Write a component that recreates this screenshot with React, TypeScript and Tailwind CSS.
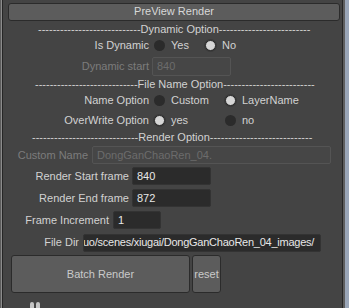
import React from "react";

const Radio = ({ on }: { on: boolean }) => (
  <div
    className={
      on
        ? "w-[11px] h-[11px] rounded-full bg-[#d6d6d6] border border-[#2a2a2a] shadow-[0_0_0_1px_#3a3a3a] shrink-0"
        : "w-[11px] h-[11px] rounded-full bg-[#2b2b2b] shrink-0"
    }
  />
);

const RadioOpt = ({ on, label, w }: { on: boolean; label: string; w: string }) => (
  <div className={`flex items-center ${w}`}>
    <Radio on={on} />
    <span className="ml-[6px] text-[#d2d2d2]">{label}</span>
  </div>
);

export default function App() {
  const d = (n: number) => "-".repeat(n);
  return (
    <div className="w-[349px] h-[308px] flex overflow-hidden [font-family:'Liberation_Sans',Arial,sans-serif] text-[11px] leading-none bg-[#444444]">
      <div className="w-[1px] bg-[#5c5c5c]" />
      <div className="w-[1px] bg-[#8c8c8c]" />
      <div className="w-[341px] shrink-0 flex flex-col border-l border-r border-[#262626] bg-[#444444]">
        {/* Preview button */}
        <div className="mt-[3px] ml-[5px] w-[332px] h-[18px] rounded-[3px] border border-[#2b2b2b] bg-[#5c5c5c] flex items-center justify-center text-[#d8d8d8]">
          PreView Render
        </div>
        {/* Dynamic option */}
        <div className="h-[18px] flex items-center pl-[35px] whitespace-nowrap text-[#d2d2d2]">
          {d(28) + "Dynamic Option" + d(25)}
        </div>
        <div className="h-[14px] flex items-center">
          <div className="w-[146px] text-right text-[#d2d2d2]">Is Dynamic</div>
          <div className="ml-[5px] flex items-center">
            <RadioOpt on={false} label="Yes" w="w-[51px]" />
            <RadioOpt on={true} label="No" w="w-[51px]" />
          </div>
        </div>
        <div className="h-[27px] flex items-center">
          <div className="w-[146px] text-right text-[#7c7c7c]">Dynamic start</div>
          <div className="ml-[3px] w-[79px] h-[19px] rounded-[2px] border border-[#545454] bg-[#464646] flex items-center pl-[4px] text-[#6c6c6c]">
            840
          </div>
        </div>
        {/* File name option */}
        <div className="h-[10px] flex items-center pl-[32px] whitespace-nowrap text-[#d2d2d2]">
          {d(28) + "File Name Option" + d(25)}
        </div>
        <div className="h-[22px] flex items-center">
          <div className="w-[146px] text-right text-[#d2d2d2]">Name Option</div>
          <div className="ml-[5px] flex items-center">
            <RadioOpt on={false} label="Custom" w="w-[71px]" />
            <RadioOpt on={true} label="LayerName" w="w-[80px]" />
          </div>
        </div>
        <div className="h-[18px] flex items-center">
          <div className="w-[146px] text-right text-[#d2d2d2]">OverWrite Option</div>
          <div className="ml-[5px] flex items-center">
            <RadioOpt on={true} label="yes" w="w-[71px]" />
            <RadioOpt on={false} label="no" w="w-[60px]" />
          </div>
        </div>
        {/* Render option */}
        <div className="h-[16px] flex items-center pl-[29px] whitespace-nowrap text-[#d2d2d2]">
          {d(29) + "Render Option" + d(28)}
        </div>
        <div className="h-[20px] flex items-center">
          <div className="w-[85px] text-right text-[#7c7c7c]">Custom Name</div>
          <div className="ml-[4px] w-[239px] h-[18px] rounded-[2px] border border-[#545454] bg-[#464646] flex items-center pl-[4px] text-[#6c6c6c]">
            DongGanChaoRen_04.
          </div>
        </div>
        <div className="h-[22px] flex items-center">
          <div className="w-[126px] text-right text-[#d2d2d2]">Render Start frame</div>
          <div className="ml-[3px] w-[79px] h-[18px] rounded-[2px] border border-[#333333] bg-[#2b2b2b] flex items-center pl-[4px] text-[#e8e8e8]">
            840
          </div>
        </div>
        <div className="h-[22px] flex items-center">
          <div className="w-[126px] text-right text-[#d2d2d2]">Render End frame</div>
          <div className="ml-[3px] w-[79px] h-[18px] rounded-[2px] border border-[#333333] bg-[#2b2b2b] flex items-center pl-[4px] text-[#e8e8e8]">
            872
          </div>
        </div>
        <div className="h-[22px] flex items-center">
          <div className="w-[106px] text-right text-[#d2d2d2]">Frame Increment</div>
          <div className="ml-[4px] w-[48px] h-[18px] rounded-[2px] border border-[#333333] bg-[#2b2b2b] flex items-center pl-[4px] text-[#e8e8e8]">
            1
          </div>
        </div>
        <div className="h-[23px] flex items-center">
          <div className="w-[76px] text-right text-[#d2d2d2]">File Dir</div>
          <div className="ml-[4px] w-[238px] h-[18px] rounded-[2px] border border-[#333333] bg-[#2b2b2b] flex items-center overflow-hidden whitespace-nowrap text-[#e8e8e8]">
            <span className="ml-[-1px] tracking-[-0.25px]">uo/scenes/xiugai/DongGanChaoRen_04_images/</span>
          </div>
        </div>
        {/* buttons */}
        <div className="mt-[1px] h-[38px] flex">
          <div className="ml-[8px] w-[179px] h-[38px] rounded-[3px] border border-[#2b2b2b] bg-[#5c5c5c] flex items-center justify-center text-[#cacaca]">
            Batch Render
          </div>
          <div className="ml-[2px] w-[29px] h-[38px] rounded-[3px] border border-[#2b2b2b] bg-[#5c5c5c] flex items-center justify-center text-[#cacaca]">
            reset
          </div>
        </div>
        <div className="mt-[9px] ml-[27px] flex gap-[2px]">
          <div className="w-[4px] h-[6px] rounded-t-full bg-[#c4c4c4]" />
          <div className="w-[4px] h-[6px] rounded-t-full bg-[#c4c4c4]" />
        </div>
      </div>
      <div className="w-[2px] bg-[#5e5e5e]" />
      <div className="w-[4px] bg-[#9aa6b8]" />
    </div>
  );
}
